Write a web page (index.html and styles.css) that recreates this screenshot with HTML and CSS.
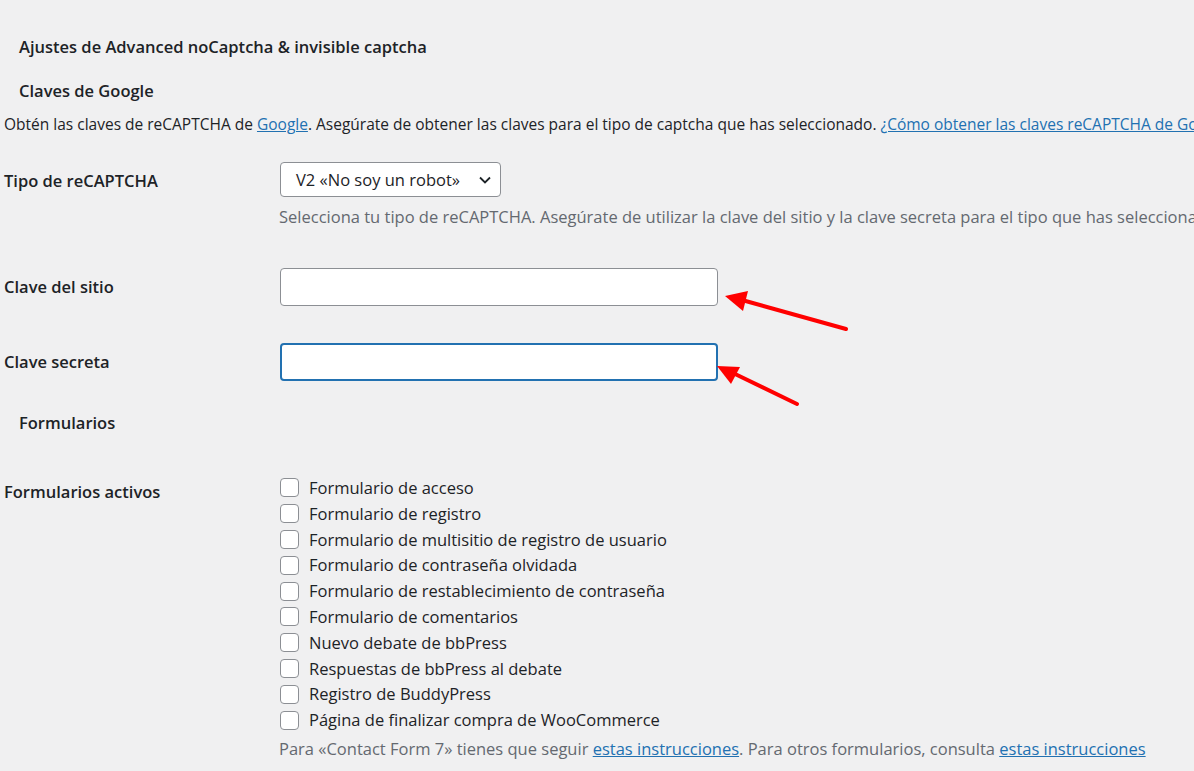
FILE: index.html
```html
<!DOCTYPE html>
<html lang="es">
<head>
    <meta charset="UTF-8">
    <title>Ajustes de Advanced noCaptcha &amp; invisible captcha</title>
    <link rel="stylesheet" href="styles.css">
</head>
<body>

<div class="wrap">
    <h1 class="page-title">Ajustes de Advanced noCaptcha &amp; invisible captcha</h1>

    <h2 class="section-title">Claves de Google</h2>
    <p class="intro">Obtén las claves de reCAPTCHA de <a href="#">Google</a>. Asegúrate de obtener las claves para el tipo de captcha que has seleccionado. <a href="#">¿Cómo obtener las claves reCAPTCHA de Google?</a></p>

    <div class="field-row first">
        <div class="field-label">Tipo de reCAPTCHA</div>
        <div class="field-body">
            <div class="select">
                <span>V2 «No soy un robot»</span>
                <svg width="14" height="14" viewBox="0 0 14 14"><path d="M2 4.5 L7 9.5 L12 4.5" fill="none" stroke="#1d2327" stroke-width="1.8"/></svg>
            </div>
            <p class="description">Selecciona tu tipo de reCAPTCHA. Asegúrate de utilizar la clave del sitio y la clave secreta para el tipo que has seleccionado.</p>
        </div>
    </div>

    <div class="field-row key">
        <div class="field-label">Clave del sitio</div>
        <div class="field-body">
            <input type="text" class="text-input">
        </div>
    </div>

    <div class="field-row key">
        <div class="field-label">Clave secreta</div>
        <div class="field-body">
            <input type="text" class="text-input focused">
        </div>
    </div>

    <h2 class="section-title forms">Formularios</h2>

    <div class="field-row checks">
        <div class="field-label">Formularios activos</div>
        <div class="field-body">
            <label class="check"><span class="box"></span>Formulario de acceso</label>
            <label class="check"><span class="box"></span>Formulario de registro</label>
            <label class="check"><span class="box"></span>Formulario de multisitio de registro de usuario</label>
            <label class="check"><span class="box"></span>Formulario de contraseña olvidada</label>
            <label class="check"><span class="box"></span>Formulario de restablecimiento de contraseña</label>
            <label class="check"><span class="box"></span>Formulario de comentarios</label>
            <label class="check"><span class="box"></span>Nuevo debate de bbPress</label>
            <label class="check"><span class="box"></span>Respuestas de bbPress al debate</label>
            <label class="check"><span class="box"></span>Registro de BuddyPress</label>
            <label class="check"><span class="box"></span>Página de finalizar compra de WooCommerce</label>
            <p class="description note">Para «Contact Form 7» tienes que seguir <a href="#">estas instrucciones</a>. Para otros formularios, consulta <a href="#">estas instrucciones</a></p>
        </div>
    </div>
</div>

<!-- arrows drawn over the screenshot -->
<svg class="arrows" width="1194" height="771" viewBox="0 0 1194 771">
    <line x1="846" y1="329" x2="742" y2="300" stroke="#ff0000" stroke-width="4" stroke-linecap="round"/>
    <polygon points="725,296 748,291 743,311" fill="#ff0000"/>
    <line x1="797" y1="404" x2="733" y2="373" stroke="#ff0000" stroke-width="4" stroke-linecap="round"/>
    <polygon points="717,366 740,367 731,384" fill="#ff0000"/>
</svg>

</body>
</html>
```

FILE: styles.css
```css
body {
    margin: 0;
    background-color: #f0f0f1;
    color: #1d2327;
    font-family: "Open Sans", "Noto Sans", sans-serif;
    font-size: 16.5px;
    overflow: hidden;
}

a {
    color: #2271b1;
}

.wrap {
    padding: 0 0 0 4px;
    white-space: nowrap;
}

.page-title {
    font-size: 16.5px;
    font-weight: 600;
    margin: 0;
    padding: 35px 0 0 15px;
    line-height: 24px;
}

.section-title {
    font-size: 16.5px;
    font-weight: 600;
    margin: 20px 0 0 15px;
    line-height: 24px;
}

.intro {
    font-size: 15.5px;
    margin: 10px 0 0;
    line-height: 22px;
}

.field-row {
    display: flex;
}

.field-label {
    width: 276px;
    flex-shrink: 0;
    font-weight: 600;
    line-height: 22px;
}

.field-row.first {
    margin-top: 27px;
}

.field-row.first .field-label {
    padding-top: 8px;
}

.select {
    box-sizing: border-box;
    width: 221px;
    height: 35px;
    background: white;
    border: 1px solid #8c8f94;
    border-radius: 4px;
    display: flex;
    align-items: center;
    justify-content: space-between;
    padding: 0 8px 0 15px;
}

.description {
    color: #646970;
    margin: 9px 0 0 -1px;
    line-height: 22px;
}

.field-row.key {
    margin-top: 40px;
}

.field-row.key + .field-row.key {
    margin-top: 37px;
}

.field-row.key .field-label {
    padding-top: 8px;
}

.text-input {
    box-sizing: border-box;
    width: 438px;
    height: 38px;
    margin: 0;
    background: white;
    border: 1px solid #8c8f94;
    border-radius: 4px;
    outline: none;
}

.text-input.focused {
    border: 2px solid #2271b1;
}

.section-title.forms {
    margin-top: 30px;
}

.field-row.checks {
    margin-top: 40px;
}

.field-row.checks .field-label {
    padding-top: 6px;
}

.check {
    display: flex;
    align-items: center;
    height: 25.8px;
    line-height: 25.8px;
}

.box {
    box-sizing: border-box;
    width: 19px;
    height: 19px;
    margin-right: 10px;
    background: white;
    border: 1px solid #8c8f94;
    border-radius: 4px;
}

.description.note {
    margin-top: 5px;
}

.arrows {
    position: absolute;
    left: 0;
    top: 0;
    pointer-events: none;
}
```
